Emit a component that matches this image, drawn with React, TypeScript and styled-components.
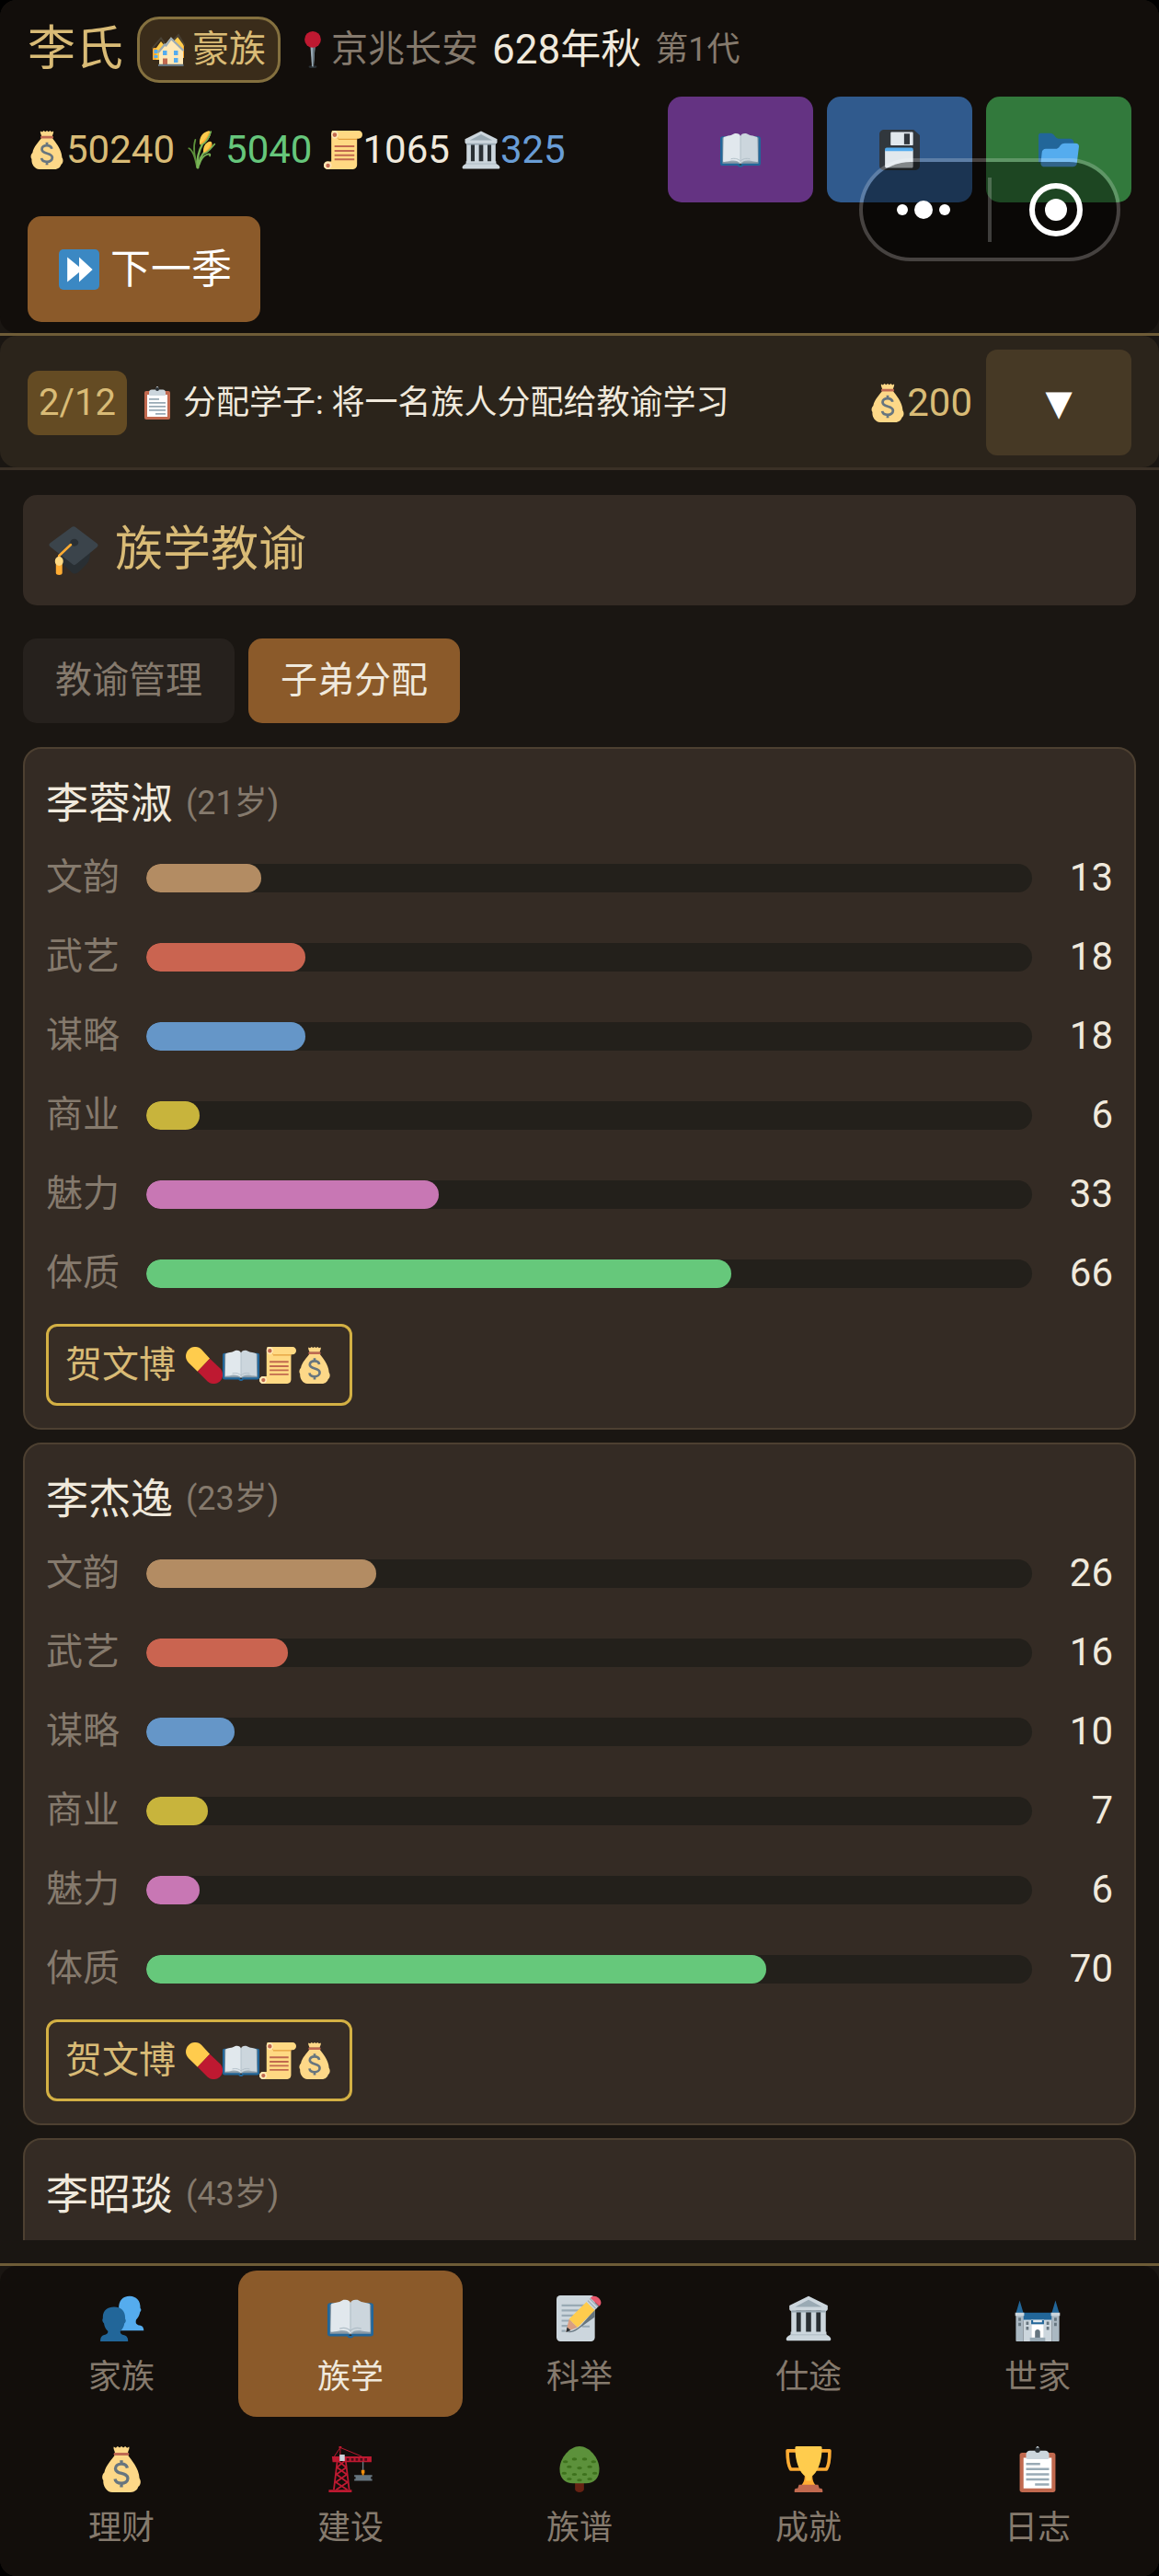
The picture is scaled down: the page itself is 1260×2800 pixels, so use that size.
import React, { useState } from "react";
import styled, { createGlobalStyle } from "styled-components";

const color = {
  page: "#1a1612",
  panel: "#120e0b",
  surface: "#342b24",
  edge: "#4d4031",
  bronze: "#8b5a2a",
  gold: "#d9bb76",
  line: "#6e5c37",
  text: "#f0e9dc",
  muted: "#857a6d",
};

const GlobalStyle = createGlobalStyle`
  * { box-sizing: border-box; }
  body {
    margin: 0;
    background: #000;
    color: ${color.text};
    font-family: Roboto, "Noto Sans CJK SC", sans-serif;
    line-height: 1.5;
  }
  button { font: inherit; color: inherit; border: 0; padding: 0; cursor: pointer; }
  h1, h2, h3, p { margin: 0; font-weight: 400; }
`;

/* ---------- pictograms, all on a 36 × 36 grid ---------- */

const glyphs: Record<string, React.ReactNode> = {
  money: (
    <>
      <path fill="#fdd888" d="M12 .4l1.600.8L15 0l1.600 1L18 0l1.500 1L21 0l1.400 1.200L24 .4c.6 1.400-.6 2.800-1 4.800H13c-.4-2-1.600-3.400-1-4.800z" />
      <path fill="#fdd888" d="M13.200 6.500C10.500 10.500 5.600 15 4.600 20.500 3 22 2.400 24.600 3.800 26.600 3.400 31 6.500 36 11 36h14.200c3.200 0 5.500-2.200 6-4.300 2-1.400 2.400-4.500.9-6.700C31.800 17 25.500 10.500 22.800 6.500z" />
      <path fill="#bf6952" d="M12.600 5h10.800c.8 0 .8 2.200 0 2.200H12.600c-.8 0-.8-2.200 0-2.200z" />
      <path fill="none" stroke="#67757f" strokeWidth="2.400" d="M22.600 17c-.4-2-2.200-3.200-4.600-3.200-2.700 0-4.700 1.400-4.700 3.600 0 5 9.700 2.600 9.700 7.700 0 2.400-2.200 3.900-5 3.900-2.700 0-4.700-1.200-5-3.400M18 11v3M18 28.700v3.300" />
    </>
  ),
  rice: (
    <>
      <path fill="none" stroke="#5c913b" strokeWidth="1.500" strokeLinecap="round" d="M9.500 34C8 26 6 18 2 16.500M9.500 32C7.500 24 5.500 16 8 8.500" />
      <path fill="none" stroke="#77b255" strokeWidth="2" strokeLinecap="round" d="M10 34.500C9.500 27 10.500 20 14.500 13M10.500 34.500C11.500 27 14 22 18 18.500" />
      <path fill="none" stroke="#77b255" strokeWidth="1.500" strokeLinecap="round" d="M11.500 32c1.500-5 4.500-9 8-10 2.500-.6 2.500 0 2 1.500" />
      <path fill="#ffcc4d" d="M12 12.500C11.500 6 15 1.500 20.500.3 22 .3 22.500 2 21.800 4.500 20.500 8.500 17.500 11.500 13 13z" />
      <path fill="#ffac33" d="M12 12.500C14.500 10.500 18.500 7.500 20.300 2l1.800.6C21 8 17.500 11.500 13 13z" />
      <path fill="#ffcc4d" d="M15.500 20.500C15 14.500 17.500 11 21.500 10c1.500-.2 2.200 1 2 3-.4 3.500-2.800 6.200-7 7.500z" />
      <path fill="#ffac33" d="M16 20.500c2-1.800 5-4 6.300-8.500l1.200 1c-.4 3.500-2.800 6.200-7 7.500z" />
      <path fill="none" stroke="#77b255" strokeWidth="1.500" strokeLinecap="round" d="M13.500 13.500C18 11.500 20.500 7 22.500 1M16.500 21c4.500-1.500 6-5 9.500-8.500" />
    </>
  ),
  scroll: (
    <>
      <path fill="#ffd983" d="M8 0h24.500C34.500 0 36 1.600 36 3.700 36 5.800 34.500 7.500 32.500 7.500H31V32c0 2.200-1.600 4-3.700 4H3.500C1.500 36 0 34.400 0 32.400c0-2.100 1.500-3.700 3.500-3.700H7V3.700C7 1.500 7.500 0 8 0z" />
      <path fill="#ffe8b6" d="M7 3.700C7 1.700 8.400 0 10.200 0c1.800 0 3.300 1.700 3.300 3.700s-1.500 3.700-3.300 3.700S7 5.700 7 3.700zM0 32.400c0-2 1.600-3.700 3.600-3.700 2 0 3.700 1.600 3.700 3.600S5.600 36 3.600 36 0 34.400 0 32.400z" />
      <path fill="#e39f3d" d="M12.500 7.400c.7-.5 1-1.300 1-2V8.500H31V7.500z" />
      <path fill="#c1694f" d="M8.200 3.900a2 2 0 1 1 4 0 2 2 0 0 1-4 0zM2 32.500a1.900 1.900 0 1 1 3.800 0 1.900 1.900 0 0 1-3.800 0zM10 13.800h18.500v1.700H10zM10 18h18.500v1.700H10zM10 22h18.500v1.700H10zM10 26h18.500v1.700H10z" />
    </>
  ),
  temple: (
    <>
      <path fill="#ccd6dd" d="M18 .5L33 8v2.500c0 1.200-1 2-2 2H5c-1 0-2-.8-2-2V8z" />
      <path fill="#9aaab4" d="M18 3.500L28.500 9h-21z" />
      <path fill="#66757f" d="M5 12h26v19H5z" />
      <path fill="#292f33" d="M8 12h20v18H8z" />
      <path fill="#ccd6dd" d="M4.500 12h4v18h-4zM12 12h4v18h-4zM20 12h4v18h-4zM27.500 12h4v18h-4z" />
      <path fill="#9aaab4" d="M4.500 11.800h27v1.500h-27z" />
      <path fill="#ccd6dd" d="M4 28.500h28v2.300c1.800.7 3.500 2 3.500 3.400 0 .8-.5 1.300-1.300 1.300H1.800C1 35.500.5 35 .5 34.200.5 32.800 2.200 31.500 4 30.800z" />
      <path fill="#b8c4cc" d="M4 30.200h28v1.200H4z" />
    </>
  ),
  book: (
    <>
      <path fill="#226699" d="M2 6h32c1.300 0 2 .8 2 2v22c0 1.400-.8 2-2 2H20.500c-.3.8-1.200 1.400-2.500 1.400s-2.200-.6-2.500-1.400H2c-1.200 0-2-.7-2-2V8c0-1.200.8-2 2-2z" />
      <path fill="#8899a6" d="M2 7h32v23H2z" />
      <path fill="#99aab5" d="M18 31l-3-2.500H2.500L3 8h30l.5 20.500H21z" />
      <path fill="#e1e8ed" d="M3 6.500C6 5.700 8.500 5 9.500 5l3-1.500C15.500 3 17.500 4 18 6v24c-2-2.600-6-3-9-2.300-3 .6-5 1-6.500.8z" />
      <path fill="#ccd6dd" d="M33 6.500C30 5.700 27.500 5 26.500 5l-3-1.500C20.500 3 18.500 4 18 6v24c2-2.600 6-3 9-2.300 3 .6 5 1 6.500.8z" />
      <path fill="none" stroke="#b0bec7" strokeWidth=".8" d="M18 6v23M18 28c-1.600-2-5-3-8.500-2M18 28c1.600-2 5-3 8.500-2" />
      <path fill="#292f33" d="M18 29.800l1.200 1.800h-2.400z" />
    </>
  ),
  floppy: (
    <>
      <path fill="#31373d" d="M4 0h26.500L36 5v27c0 2.200-1.800 4-4 4H4c-2.200 0-4-1.800-4-4V4c0-2.200 1.800-4 4-4z" />
      <path fill="#e1e8ed" d="M11 2h18c.6 0 1 .4 1 1v10c0 .6-.4 1-1 1H11c-.6 0-1-.4-1-1V3c0-.6.4-1 1-1z" />
      <path fill="#31373d" d="M22 3.500h5v9.500h-5z" />
      <path fill="#e1e8ed" d="M5 18h25v14.500c0 1-.6 1.500-1.500 1.500h-22c-.9 0-1.500-.6-1.500-1.500z" />
      <path fill="#55acee" d="M6.500 16h22c.9 0 1.500.6 1.500 1.500V19H5v-1.500c0-.9.600-1.500 1.500-1.500z" />
    </>
  ),
  folder: (
    <>
      <path fill="#226699" d="M0 29V5c0-1.500 1.200-2 2.500-2H10c2.500 0 3.500 1.200 4.700 2.900C16 7.700 17 8 19 8h9c2 0 3.500 1.600 3.500 3.500V29z" />
      <path fill="#55acee" d="M33 12H23.500c-2 0-3.500 1-4.500 2.500-1.200 1.800-2 2.500-4 2.500H6.500C4.500 17 3 18.500 3 20.500L2 30c0 2 1.500 3 3.500 3h25c2 0 3.500-1.400 3.600-3L36 15c0-2-1-3-3-3z" />
    </>
  ),
  forward: (
    <>
      <rect width="36" height="36" rx="4" fill="#3b88c3" />
      <path fill="#fff" d="M7.500 7L18 15.500V7l12 11-12 11v-8.500L7.500 29z" />
    </>
  ),
  houses: (
    <>
      <path fill="#ffac33" d="M1 16h8v13H1zM27 11h8v16h-8z" />
      <path fill="#ffcc4d" d="M5 16l5-7 6 7v13H5zM23 10l5-6 6 8v8H23z" />
      <path fill="none" stroke="#4a4235" strokeWidth="1.800" d="M0 17L10 5.500 14 11M21 10l8-8 7 12" />
      <path fill="#55acee" d="M2.500 18h4v4h-4zM2.500 24h4v3h-4zM31 18h3v5h-3z" />
      <path fill="#ffe8b6" d="M8 20l6-7 7-8.500L34 19v15H8z" />
      <path fill="none" stroke="#99aab5" strokeWidth="2.200" d="M7 21l7-8.500 1.500 1L21 6l13.500 13" />
      <path fill="#55acee" d="M12 19h4.500v5H12zM24 19h4.500v5H24zM24 27h4.500v5H24z" />
      <path fill="#c1694f" d="M12 27.500h5V35h-5z" />
      <path fill="#66757f" d="M7 33.800h27.500V36H7z" />
    </>
  ),
  pin: (
    <>
      <ellipse cx="18" cy="34.600" rx="4" ry="1.400" fill="#292f33" />
      <path fill="#99aab5" d="M15.500 12h5l-1.600 22c-.1.900-1.700.9-1.800 0z" />
      <path fill="#66757f" d="M18 12h2.500l-1.600 22c0 .5-.5.700-.9.700z" />
      <circle cx="18" cy="8" r="8" fill="#be1931" />
    </>
  ),
  clipboard: (
    <>
      <rect x="4" y="5" width="28" height="31" rx="2" fill="#c1694f" />
      <path fill="#fff" d="M7 9h22v24H7z" />
      <path fill="#ccd6dd" d="M14 3.500h2.500C16.500 1.500 17 0 18 0s1.500 1.500 1.500 3.500H24c1.700 0 3 1.300 3 3V9c0 .6-.5 1-1 1H10c-.6 0-1-.4-1-1V6.500c0-1.700 1.300-3 3-3z" />
      <circle cx="18" cy="3" r="2" fill="#292f33" />
      <path fill="#99aab5" d="M9 13h11v1.800H9zM9 17h18v1.800H9zM9 21h18v1.800H9zM9 25h18v1.800H9zM16 29h11v1.800H16z" />
    </>
  ),
  gradcap: (
    <>
      <path fill="#292f33" d="M8 20l22-1c0 5-1 7.500-3 9.500l-5 5c-2 2-4 2-5.500.5L8 26z" />
      <path fill="#3b444b" d="M16.400 1.500c1-1 2.200-1 3.200 0L34.800 13c1.200 1 1.200 1.800 0 3L20 28c-1 1-2 1-3 0L1 15.500c-1-1-1-1.800 0-2.700z" />
      <ellipse cx="18.500" cy="12.500" rx="3" ry="2.600" fill="#292f33" />
      <path fill="none" stroke="#ffac33" strokeWidth="1.700" strokeLinecap="round" d="M16 14l-8.500 8V26" />
      <path fill="#ffac33" d="M5.200 27h4.600v7.500c0 2-4.600 2-4.600 0z" />
      <ellipse cx="7.500" cy="26" rx="3" ry="3.300" fill="#ffd983" />
    </>
  ),
  pill: (
    <>
      <path fill="#ffcc4d" d="M2.700 2.600c3.500-3.500 9.300-3.500 12.800 0L23.500 11.500 11.500 24 2.700 15.500c-3.600-3.500-3.600-9.300 0-12.900z" />
      <path fill="#be1931" d="M23.500 11.500L11.500 24l9.500 9.500c3.500 3.500 9.200 3.300 12.500 0 3.500-3.500 3.300-9 0-12.500z" />
    </>
  ),
  people: (
    <>
      <path fill="#55acee" d="M16 11C15.500 4 19 .5 24.500.5c5 0 8.500 3.500 8.300 9.500.8.500.9 2-.2 3-.6 3-1.600 4.600-3.100 6-.8 3 .5 4 3.500 4.600 1.800.6 2.500 2 2.500 4H15z" />
      <path fill="#226699" d="M3.500 18C3 12 7 9 12.300 9c5.500 0 9 3.400 8.600 9.400.8.800.7 2.600-.5 3.300-.5 2.700-1.600 4.800-3.200 6.200-.4 2 .8 2.700 3 3.200 2 .5 3 2 3 4.900H1.500c0-2.900.8-4.400 3-5 2-.5 3.200-1.200 2.900-3.100-1.600-1.400-2.700-3.500-3.100-6.200-1.300-.8-1.500-2.800-.8-3.700z" />
    </>
  ),
  memo: (
    <>
      <rect width="30" height="36" rx="3" x="0" fill="#ccd6dd" />
      <path fill="#99aab5" d="M4 7h19v1.600H4zM4 11h17v1.600H4zM4 15h14v1.600H4zM4 19h10v1.600H4zM4 23h6v1.600H4zM4 27h3v1.600H4zM20 23.500h6v1.600h-6z" />
      <path fill="#66757f" d="M7.500 28.500c5 0 9-2 13-6.500L30 11v6L16 27c-3 2-6 2.500-8.500 1.500z" />
      <path fill="#d99e82" d="M7.500 28.500l2.300-10 6.700 6.500z" />
      <path fill="#ffcc4d" d="M9.800 18.500L23.500 5l6.500 6.500L16.500 25z" />
      <path fill="#ccd6dd" d="M23.500 5l3-3 6.500 6.500-3 3z" />
      <path fill="none" stroke="#99aab5" strokeWidth=".8" d="M24.500 4l6.500 6.500M26 2.500L32.500 9" />
      <path fill="#ea596e" d="M26.500 2c1.500-2 4.300-2 6.500 0 2.200 2.200 2.500 4.800.5 6.500z" />
      <path fill="#292f33" d="M7.500 28.800l.8-4 2.800 2.600z" />
    </>
  ),
  castle: (
    <>
      <path fill="#226699" d="M4 4l3 10H1zM32 4l3 10h-6zM6 13.500h24V20H6z" />
      <path fill="#aab8c2" d="M1 15h6v21H1.500c-.5 0-.5-.5-.5-1zM29 15h6v20c0 .5 0 1-.5 1H29z" />
      <path fill="#ccd6dd" d="M.5 13.500h7V16h-7zM28.500 13.500h7V16h-7zM7 19h6v17H7zM23 19h6v17h-6z" />
      <path fill="#e1e8ed" d="M13 19h10v17H13z" />
      <path fill="#fff" d="M13.500 23h9v10h-9z" />
      <path fill="#226699" d="M13 19.500h1.500V21h7v-1.500H23V22.500H13z" />
      <path fill="#66757f" d="M16 28.500c0-2.500 4-2.500 4 0V36h-4zM3 17.500h2V20H3zM31 17.500h2V20h-2zM3 21.500h2V24H3zM31 21.500h2V24h-2zM9 20.500h2V23H9zM25 20.500h2V23h-2zM9 24.500h2V27H9zM25 24.500h2V27h-2z" />
      <path fill="#99aab5" d="M12 33h12v3H12z" />
    </>
  ),
  crane: (
    <>
      <path fill="none" stroke="#be1931" strokeWidth="1.300" d="M5 34L8 9M17 34L14 9M6.500 28l9 6M15.800 28l-9 6M7 22l8.500 6M15.300 22L6.500 28M7.500 16.500l7.500 5.500M14.800 16.500L7 22M8 11l6.500 5.500M14 11l-6.500 5.500" />
      <path fill="none" stroke="#be1931" strokeWidth=".7" d="M5 8.500L10 1l17 7M10 1v8" />
      <path fill="#be1931" d="M9 0h2v1.500H9zM3.500 8h6v4.500H4zM13 8h21.500v4.500H13zM1 34h18v2H1z" />
      <path fill="#4c0d18" d="M15 9.300h2v2h-2zM18.500 9.300h2v2h-2zM22 9.300h2v2h-2zM25.500 9.300h2v2h-2zM29 9.300h2v2h-2z" />
      <path fill="#ccd6dd" d="M9.500 6.500h4v5h-4z" />
      <path fill="#66757f" d="M27.300 12h1v7h-1zM21 22.500h14V24h-1v1.500h1V27H21v-1.500h1V24h-1z" />
      <path fill="#f4900c" d="M26.500 18.500h2.600v2.700h-.6v1.500h-1.400v-1.500h-.6z" />
    </>
  ),
  tree: (
    <>
      <path fill="#662113" d="M14.500 26h7v7.500c0 3.300-7 3.300-7 0z" />
      <path fill="#5c913b" d="M33.500 18c0 7-4 11-10.500 11H13C6.500 29 2.500 25 2.500 18 2.500 9 10.500 0 18 0s15.500 9 15.500 18z" />
      <g fill="#3e721d">
        {[
          [14, 10], [22, 10], [7, 12], [29, 12], [10, 16], [18, 17], [26, 16],
          [6, 21], [14, 22], [22, 22], [30, 21], [10, 25.500], [18, 26.500], [26, 25.500],
        ].map(([cx, cy]) => (
          <ellipse key={`${cx}-${cy}`} cx={cx} cy={cy} rx="2" ry="1.100" />
        ))}
      </g>
    </>
  ),
  trophy: (
    <>
      <path fill="none" stroke="#ffac33" strokeWidth="2.600" strokeLinejoin="round" d="M9 3.500H1.500C1.500 10 2 15 4 18h8M27 3.500h7.500C34.500 10 34 15 32 18h-8" />
      <path fill="#ffac33" d="M15 22h6c0 4 .5 6 2.500 8.500h-11C14.500 28 15 26 15 22z" />
      <path fill="#ffcc4d" d="M8.500 0h19c.8 0 1 .5 1 1.500C28.500 12 25 21 20 24v3h-4v-3C11 21 7.500 12 7.500 1.500c0-1 .3-1.500 1-1.500z" />
      <path fill="#c1694f" d="M10.500 30h15l1 3h1c1 0 1.500.8 1.500 1.700V36H7v-1.300c0-.9.500-1.700 1.500-1.700h1z" />
    </>
  ),
};

const Svg = styled.svg<{ $size: number }>`
  display: block;
  flex: none;
  width: ${(p) => p.$size}px;
  height: ${(p) => p.$size}px;
`;

const Emoji = ({ name, size = 42 }: { name: string; size?: number }) => (
  <Svg $size={size} viewBox="0 0 36 36" aria-hidden="true">
    {glyphs[name]}
  </Svg>
);

/* ---------- shell ---------- */

const Screen = styled.div`
  display: flex;
  flex-direction: column;
  height: 100vh;
  overflow: hidden;
  border-radius: 18px;
  background: ${color.page};
`;

const Header = styled.header`
  position: relative;
  border-bottom: 3px solid ${color.line};
`;

const HeaderPanel = styled.div`
  display: flex;
  flex-direction: column;
  align-items: stretch;
  gap: 15px;
  padding: 18px 30px 12px;
  border-radius: 18px;
  background: ${color.panel};
`;

const Row = styled.div`
  display: flex;
  align-items: center;
  gap: 15px;
`;

const ClanName = styled.h1`
  font-size: 52px;
  line-height: 72px;
  color: ${color.gold};
`;

const Rank = styled.span`
  display: flex;
  align-items: center;
  gap: 8px;
  height: 72px;
  padding: 0 13px;
  border: 3px solid #84703f;
  border-radius: 24px;
  background: #3a2c1a;
  color: ${color.gold};
  font-size: 40px;
  line-height: 60px;
`;

const Place = styled.span`
  display: flex;
  align-items: center;
  color: ${color.muted};
  font-size: 40px;
  line-height: 60px;
`;

const Season = styled.span`
  font-size: 44px;
  line-height: 60px;
`;

const Generation = styled.span`
  color: ${color.muted};
  font-size: 36px;
  line-height: 60px;
`;

const Resources = styled.div`
  display: flex;
  flex: 1;
  gap: 13px;
`;

const Amount = styled.span<{ $tone: string }>`
  display: flex;
  align-items: center;
  color: ${(p) => p.$tone};
  font-size: 42px;
  line-height: 60px;
`;

const SquareButton = styled.button<{ $fill: string; $radius?: number }>`
  display: flex;
  align-items: center;
  justify-content: center;
  flex: none;
  width: 158px;
  height: 115px;
  border-radius: ${(p) => p.$radius ?? 15}px;
  background: ${(p) => p.$fill};
`;

const NextSeason = styled.button`
  display: flex;
  align-items: center;
  gap: 12px;
  align-self: flex-start;
  height: 115px;
  padding: 0 31px 0 34px;
  border-radius: 15px;
  background: ${color.bronze};
  color: #fff;
  font-size: 44px;
`;

const Capsule = styled.div`
  position: absolute;
  top: 172px;
  right: 42px;
  display: flex;
  align-items: center;
  gap: 4px;
  width: 284px;
  height: 112px;
  border: 4px solid rgba(255, 255, 255, 0.22);
  border-radius: 56px;
  background: rgba(0, 0, 0, 0.42);
  background-clip: padding-box;
`;

const CapsuleButton = styled.button`
  display: flex;
  align-items: center;
  justify-content: center;
  flex: 1;
  height: 100%;
  background: none;
`;

const CapsuleDivider = styled.span`
  width: 4px;
  height: 70px;
  background: rgba(255, 255, 255, 0.22);
`;

/* ---------- current task ---------- */

const TaskBar = styled.section`
  border-bottom: 3px solid #3a3026;
`;

const TaskPanel = styled.div`
  display: flex;
  align-items: center;
  gap: 15px;
  padding: 15px 30px 13px;
  border-radius: 18px;
  background: #2b241b;
`;

const TaskCount = styled.span`
  padding: 0 12px;
  border-radius: 12px;
  background: #644b23;
  color: ${color.gold};
  font-size: 40px;
  line-height: 70px;
`;

const TaskText = styled.p`
  display: flex;
  align-items: center;
  gap: 10px;
  flex: 1;
  font-size: 36px;
  line-height: 54px;
`;

const Arrow = styled.span`
  color: #fff;
  font-family: "DejaVu Sans", sans-serif;
  font-size: 38px;
  line-height: 44px;
`;

/* ---------- content ---------- */

const Content = styled.main`
  display: flex;
  flex-direction: column;
  flex: 1;
  min-height: 0;
  margin: 27px 25px 25px;
  overflow: hidden;
`;

const SectionTitle = styled.h2`
  display: flex;
  align-items: center;
  gap: 18px;
  flex: none;
  height: 120px;
  padding: 0 28px;
  border-radius: 15px;
  background: ${color.surface};
  color: ${color.gold};
  font-size: 52px;
`;

const Tabs = styled.div`
  display: flex;
  flex: none;
  gap: 15px;
  margin: 36px 0 26px;
`;

const Tab = styled.button<{ $active: boolean }>`
  height: 92px;
  padding: 0 35px;
  border-radius: 15px;
  background: ${(p) => (p.$active ? color.bronze : "#26211d")};
  color: ${(p) => (p.$active ? color.text : color.muted)};
  font-size: 40px;
`;

const CardList = styled.div`
  display: flex;
  flex-direction: column;
  gap: 14px;
`;

const Card = styled.article`
  flex: none;
  min-height: 742px;
  padding: 23px;
  border: 2px solid ${color.edge};
  border-radius: 20px;
  background: ${color.surface};
`;

const CardHead = styled.div`
  display: flex;
  align-items: center;
  gap: 14px;
  margin-bottom: 9px;
  line-height: 72px;
`;

const PersonName = styled.h3`
  font-size: 46px;
`;

const Age = styled.span`
  color: ${color.muted};
  font-size: 36px;
`;

const Stats = styled.div`
  display: grid;
  gap: 14px;
  margin-bottom: 19px;
`;

const StatRow = styled.div`
  display: grid;
  grid-template-columns: 94px 1fr 73px;
  align-items: center;
  column-gap: 15px;
  line-height: 72px;
`;

const StatLabel = styled.span`
  color: ${color.muted};
  font-size: 40px;
`;

const Track = styled.div`
  height: 31px;
  overflow: hidden;
  border-radius: 16px;
  background: #23201b;
`;

const Fill = styled.div<{ $tone: string }>`
  height: 100%;
  border-radius: 16px;
  background: ${(p) => p.$tone};
`;

const StatValue = styled.span`
  text-align: right;
  font-size: 42px;
`;

const Tutor = styled.button`
  display: flex;
  align-items: center;
  gap: 11px;
  height: 89px;
  padding: 0 18px;
  border: 3px solid #d3b044;
  border-radius: 12px;
  background: #372d25;
  color: ${color.gold};
  font-size: 40px;
`;

const Skills = styled.span`
  display: flex;
`;

/* ---------- bottom navigation ---------- */

const Nav = styled.nav`
  flex: none;
  border-top: 3px solid ${color.line};
`;

const NavGrid = styled.div`
  display: grid;
  grid-template-columns: repeat(5, 1fr);
  gap: 5px;
  padding: 5px 10px 9px;
  border-radius: 18px;
  background: ${color.panel};
`;

const NavItem = styled.button<{ $active: boolean }>`
  display: flex;
  flex-direction: column;
  align-items: center;
  gap: 12px;
  height: 159px;
  padding-top: 27px;
  border-radius: 20px;
  background: ${(p) => (p.$active ? color.bronze : "none")};
  color: ${(p) => (p.$active ? color.text : color.muted)};
  font-size: 36px;
  line-height: 54px;
`;

/* ---------- data ---------- */

const statKinds = [
  { label: "文韵", tone: "#b38c63" },
  { label: "武艺", tone: "#ca6450" },
  { label: "谋略", tone: "#6596c8" },
  { label: "商业", tone: "#c8b43c" },
  { label: "魅力", tone: "#c877b4" },
  { label: "体质", tone: "#66c87b" },
];

const people = [
  { name: "李蓉淑", age: 21, stats: [13, 18, 18, 6, 33, 66], tutor: "贺文博" },
  { name: "李杰逸", age: 23, stats: [26, 16, 10, 7, 6, 70], tutor: "贺文博" },
  { name: "李昭琰", age: 43, stats: [], tutor: "" },
];

const resources = [
  { icon: "money", value: 50240, tone: color.gold },
  { icon: "rice", value: 5040, tone: "#66c67b" },
  { icon: "scroll", value: 1065, tone: color.text },
  { icon: "temple", value: 325, tone: "#699dd6" },
];

const navItems = [
  ["people", "家族"],
  ["book", "族学"],
  ["memo", "科举"],
  ["temple", "仕途"],
  ["castle", "世家"],
  ["money", "理财"],
  ["crane", "建设"],
  ["tree", "族谱"],
  ["trophy", "成就"],
  ["clipboard", "日志"],
];

const tabNames = ["教谕管理", "子弟分配"];

export default function App() {
  const [tab, setTab] = useState("子弟分配");
  const [page, setPage] = useState("族学");

  return (
    <>
      <GlobalStyle />
      <Screen>
        <Header>
          <HeaderPanel>
            <Row>
              <ClanName>李氏</ClanName>
              <Rank>
                <Emoji name="houses" size={36} />
                豪族
              </Rank>
              <Place>
                <Emoji name="pin" size={40} />
                京兆长安
              </Place>
              <Season>628年秋</Season>
              <Generation>第1代</Generation>
            </Row>
            <Row>
              <Resources>
                {resources.map((r) => (
                  <Amount key={r.icon} $tone={r.tone}>
                    <Emoji name={r.icon} />
                    {r.value}
                  </Amount>
                ))}
              </Resources>
              <SquareButton $fill="#643382" aria-label="图鉴">
                <Emoji name="book" size={44} />
              </SquareButton>
              <SquareButton $fill="#305a8d" aria-label="保存">
                <Emoji name="floppy" size={44} />
              </SquareButton>
              <SquareButton $fill="#32793c" aria-label="读取">
                <Emoji name="folder" size={44} />
              </SquareButton>
            </Row>
            <NextSeason>
              <Emoji name="forward" size={44} />
              下一季
            </NextSeason>
          </HeaderPanel>
          <Capsule>
            <CapsuleButton aria-label="更多">
              <svg width="60" height="24" viewBox="0 0 60 24" fill="#fff">
                <circle cx="7" cy="12" r="6" />
                <circle cx="30" cy="12" r="10" />
                <circle cx="53" cy="12" r="6" />
              </svg>
            </CapsuleButton>
            <CapsuleDivider />
            <CapsuleButton aria-label="关闭">
              <svg width="60" height="60" viewBox="0 0 60 60">
                <circle cx="30" cy="30" r="26" fill="none" stroke="#fff" strokeWidth="6" />
                <circle cx="30" cy="30" r="12" fill="#fff" />
              </svg>
            </CapsuleButton>
          </Capsule>
        </Header>

        <TaskBar>
          <TaskPanel>
            <TaskCount>2/12</TaskCount>
            <TaskText>
              <Emoji name="clipboard" size={36} />
              分配学子: 将一名族人分配给教谕学习
            </TaskText>
            <Amount $tone={color.gold}>
              <Emoji name="money" />
              200
            </Amount>
            <SquareButton $fill="#463925" $radius={12} aria-label="展开任务">
              <Arrow>▼</Arrow>
            </SquareButton>
          </TaskPanel>
        </TaskBar>

        <Content>
          <SectionTitle>
            <Emoji name="gradcap" size={54} />
            族学教谕
          </SectionTitle>
          <Tabs role="tablist">
            {tabNames.map((name) => (
              <Tab
                key={name}
                role="tab"
                aria-selected={tab === name}
                $active={tab === name}
                onClick={() => setTab(name)}
              >
                {name}
              </Tab>
            ))}
          </Tabs>
          <CardList>
            {people.map((person) => (
              <Card key={person.name}>
                <CardHead>
                  <PersonName>{person.name}</PersonName>
                  <Age>({person.age}岁)</Age>
                </CardHead>
                {person.stats.length > 0 && (
                  <Stats>
                    {person.stats.map((value, i) => (
                      <StatRow key={statKinds[i].label}>
                        <StatLabel>{statKinds[i].label}</StatLabel>
                        <Track>
                          <Fill $tone={statKinds[i].tone} style={{ width: `${value}%` }} />
                        </Track>
                        <StatValue>{value}</StatValue>
                      </StatRow>
                    ))}
                  </Stats>
                )}
                {person.tutor && (
                  <Tutor>
                    {person.tutor}
                    <Skills>
                      <Emoji name="pill" size={40} />
                      <Emoji name="book" size={40} />
                      <Emoji name="scroll" size={40} />
                      <Emoji name="money" size={40} />
                    </Skills>
                  </Tutor>
                )}
              </Card>
            ))}
          </CardList>
        </Content>

        <Nav>
          <NavGrid>
            {navItems.map(([icon, label]) => (
              <NavItem
                key={label}
                $active={page === label}
                aria-current={page === label ? "page" : undefined}
                onClick={() => setPage(label)}
              >
                <Emoji name={icon} size={50} />
                {label}
              </NavItem>
            ))}
          </NavGrid>
        </Nav>
      </Screen>
    </>
  );
}
